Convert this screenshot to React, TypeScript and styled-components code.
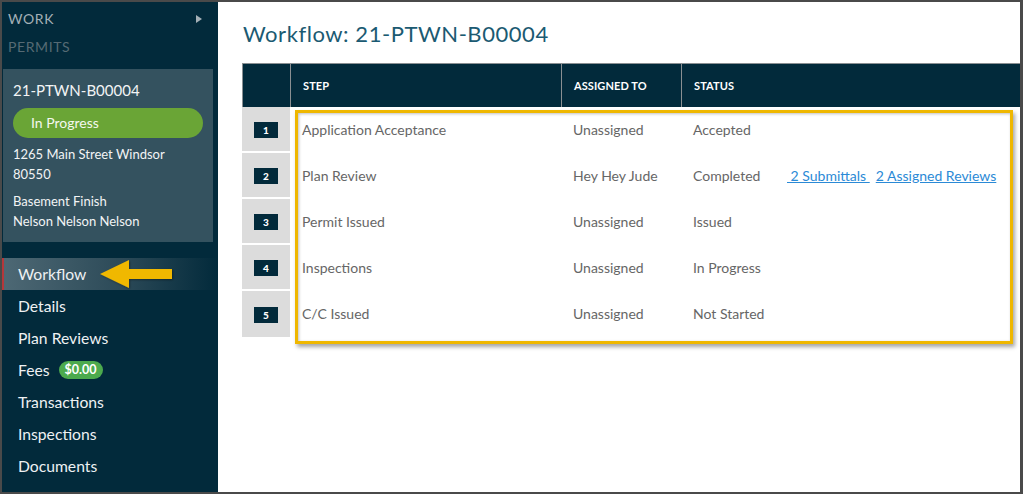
import React from "react";
import styled, { createGlobalStyle } from "styled-components";

const Global = createGlobalStyle`
  html, body { margin: 0; padding: 0; background: #fff; }
  body { font-family: "Lato", "Open Sans", sans-serif; }
  * { box-sizing: border-box; }
`;

const Frame = styled.div`
  width: 1023px;
  height: 494px;
  border: 2px solid #4a4a4a;
  border-right-width: 3px;
  display: flex;
  overflow: hidden;
  background: #fff;
`;

const Sidebar = styled.aside`
  width: 216px;
  flex: none;
  background: #022a3b;
  display: flex;
  flex-direction: column;
`;

const SectionHead = styled.div`
  padding: 3px 0 0 6px;
  height: 67px;
  position: relative;
`;

const HeadLine = styled.div<{ $dim?: boolean }>`
  font-size: 14px;
  letter-spacing: 0.6px;
  line-height: 28px;
  color: ${(p) => (p.$dim ? "#566a74" : "#a4b0b6")};
`;

const Caret = styled.span`
  position: absolute;
  right: 16px;
  top: 13px;
  width: 0;
  height: 0;
  border-top: 4px solid transparent;
  border-bottom: 4px solid transparent;
  border-left: 6px solid #a4b0b6;
`;

const Card = styled.div`
  margin: 0 5px 0 1px;
  background: #34525f;
  padding: 9px 10px 10px 10px;
  color: #f2f4f5;
  height: 173px;
`;

const CardTitle = styled.div`
  font-size: 15px;
  line-height: 24px;
  margin-bottom: 6px;
`;

const Pill = styled.div`
  background: #6aa536;
  border-radius: 15px;
  height: 30px;
  line-height: 30px;
  padding-left: 18px;
  font-size: 14px;
  color: #f4f8ef;
  margin-bottom: 6px;
`;

const CardLine = styled.div<{ $gap?: boolean }>`
  font-size: 13px;
  line-height: 20px;
  margin-top: ${(p) => (p.$gap ? "7px" : "0")};
`;

const Nav = styled.nav`
  margin-top: 16px;
  display: flex;
  flex-direction: column;
`;

const NavItem = styled.div<{ $active?: boolean }>`
  height: 32px;
  display: flex;
  align-items: center;
  padding-left: ${(p) => (p.$active ? "14px" : "16px")};
  font-size: 15.7px;
  color: #eef1f3;
  position: relative;
  border-left: ${(p) => (p.$active ? "2px solid #b5373a" : "none")};
  background: ${(p) =>
    p.$active ? "linear-gradient(90deg, #4d6874 0%, #2c4a58 55%, #022a3b 100%)" : "transparent"};
`;

const Badge = styled.span`
  margin-left: 9px;
  background: #4caa4e;
  color: #fff;
  font-weight: 700;
  font-size: 12.5px;
  border-radius: 9px;
  padding: 0 6px;
  height: 18px;
  line-height: 18px;
`;

const Arrow = styled.svg`
  position: absolute;
  left: 95px;
  top: 0;
`;

const Main = styled.main`
  flex: 1;
  padding: 18px 0 0 24px;
  min-width: 0;
`;

const Title = styled.h1`
  margin: 0 0 15px 1px;
  font-size: 22px;
  font-weight: 400;
  color: #1b5a72;
  line-height: 28px;
  letter-spacing: 0.55px;
`;

const TableWrap = styled.div`
  position: relative;
`;

const Grid = styled.div`
  display: grid;
  grid-template-columns: 48px 271px 120px 1fr;
`;

const HeadCell = styled.div`
  background: #022a3b;
  height: 44px;
  border-top: 1px solid #8a8f92;
  border-left: 1px solid #8a8f92;
  display: flex;
  align-items: center;
  padding-left: 12px;
  color: #fff;
  font-weight: 700;
  font-size: 11px;
  letter-spacing: 0.1px;
`;

const NumCell = styled.div<{ $last?: boolean }>`
  background: #dcdcdc;
  height: 46px;
  border-bottom: ${(p) => (p.$last ? "none" : "2px solid #fff")};
  display: flex;
  align-items: center;
  justify-content: center;
  padding-top: 2px;
`;

const NumBadge = styled.span`
  width: 24px;
  height: 16px;
  background: #022a3b;
  color: #fff;
  font-weight: 900;
  font-size: 10px;
  display: flex;
  align-items: center;
  justify-content: center;
`;

const Cell = styled.div`
  height: 46px;
  display: flex;
  align-items: center;
  padding-left: 12px;
  padding-bottom: 2px;
  font-size: 14px;
  color: #666;
  white-space: nowrap;
`;

const StatusText = styled.span`
  width: 94px;
`;

const Link = styled.a`
  color: #2b8ad6;
  text-decoration: underline;
  font-size: 14px;
  margin-right: 6px;
  white-space: pre;
`;

const Highlight = styled.div`
  position: absolute;
  left: 53px;
  top: 47px;
  width: 718px;
  height: 234px;
  border: 3px solid #efb700;
  box-shadow: 2px 3px 4px rgba(0, 0, 0, 0.35), inset 1px 1px 3px rgba(0, 0, 0, 0.25);
  pointer-events: none;
`;

type Row = { step: string; who: string; status: string; links?: string[] };

const rows: Row[] = [
  { step: "Application Acceptance", who: "Unassigned", status: "Accepted" },
  { step: "Plan Review", who: "Hey Hey Jude", status: "Completed", links: [" 2 Submittals ", "2 Assigned Reviews"] },
  { step: "Permit Issued", who: "Unassigned", status: "Issued" },
  { step: "Inspections", who: "Unassigned", status: "In Progress" },
  { step: "C/C Issued", who: "Unassigned", status: "Not Started" },
];

const navItems = ["Workflow", "Details", "Plan Reviews", "Fees", "Transactions", "Inspections", "Documents"];

export default function App() {
  return (
    <>
      <Global />
      <Frame>
        <Sidebar>
          <SectionHead>
            <HeadLine>WORK</HeadLine>
            <HeadLine $dim>PERMITS</HeadLine>
            <Caret />
          </SectionHead>
          <Card>
            <CardTitle>21-PTWN-B00004</CardTitle>
            <Pill>In Progress</Pill>
            <CardLine>1265 Main Street Windsor</CardLine>
            <CardLine>80550</CardLine>
            <CardLine $gap>Basement Finish</CardLine>
            <CardLine>Nelson Nelson Nelson</CardLine>
          </Card>
          <Nav>
            {navItems.map((n, i) => (
              <NavItem key={n} $active={i === 0}>
                {n}
                {n === "Fees" && <Badge>$0.00</Badge>}
                {i === 0 && (
                  <Arrow width="78" height="32" viewBox="0 0 78 32">
                    <defs>
                      <filter id="ash" x="-10%" y="-20%" width="130%" height="150%">
                        <feDropShadow dx="1" dy="1" stdDeviation="1" floodColor="#000" floodOpacity="0.35" />
                      </filter>
                    </defs>
                    <polygon
                      points="1,16 30,2 30,11 73,11 73,21 30,21 30,30"
                      fill="#f0b800"
                      filter="url(#ash)"
                    />
                  </Arrow>
                )}
              </NavItem>
            ))}
          </Nav>
        </Sidebar>
        <Main>
          <Title>Workflow: 21-PTWN-B00004</Title>
          <TableWrap>
            <Grid>
              <HeadCell />
              <HeadCell>STEP</HeadCell>
              <HeadCell>ASSIGNED TO</HeadCell>
              <HeadCell>STATUS</HeadCell>
              {rows.map((r, i) => (
                <React.Fragment key={r.step}>
                  <NumCell $last={i === rows.length - 1}>
                    <NumBadge>{i + 1}</NumBadge>
                  </NumCell>
                  <Cell>{r.step}</Cell>
                  <Cell>{r.who}</Cell>
                  <Cell>
                    <StatusText>{r.status}</StatusText>
                    {r.links?.map((l) => (
                      <Link key={l} href="#">
                        {l}
                      </Link>
                    ))}
                  </Cell>
                </React.Fragment>
              ))}
            </Grid>
            <Highlight />
          </TableWrap>
        </Main>
      </Frame>
    </>
  );
}
